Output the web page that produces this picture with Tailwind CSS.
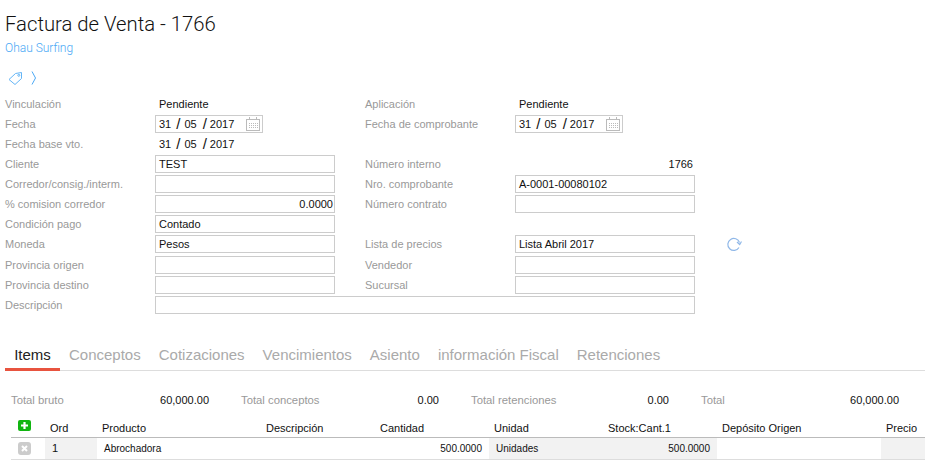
<!DOCTYPE html>
<html lang="en">
<head>
    <meta charset="UTF-8">
    <title>Factura de Venta - 1766</title>
    <script src="https://cdn.jsdelivr.net/npm/@tailwindcss/browser@4"></script>
</head>
<body class="bg-white overflow-hidden font-['Roboto',sans-serif] text-[11px] text-[#111]">
<div class="w-[925px] h-[472px] overflow-hidden">
    <!-- Header -->
    <div class="pl-[5px] pt-[10px]">
        <h1 class="text-[20.3px] leading-[28px] font-light text-[#111]">Factura de Venta - 1766</h1>
        <div class="text-[12px] leading-[16px] mt-[2px] font-light text-[#4aa8f5]">Ohau Surfing</div>
        <div class="flex items-center gap-[8px] h-[16px] mt-[14px] pl-[3px]">
            <svg class="w-[15px] h-[15px]" viewBox="0 0 15 15" fill="none" stroke="#64b5f6" stroke-width="1"><path d="M1 8.500 7.500 2.500 13.500 1.500 13.500 7.500 7 13.500Z"/><circle cx="10.800" cy="4.300" r="1"/></svg>
            <svg class="w-[6px] h-[14px]" viewBox="0 0 6 14" fill="none" stroke="#4aa8f5" stroke-width="1"><path d="M1 .5 4.500 7 1 13.500"/></svg>
        </div>
    </div>

    <!-- Form -->
    <div class="pl-[5px] mt-[8px] grid grid-cols-[150px_180px_30px_150px_180px_1fr] grid-rows-[repeat(7,20px)_21px_repeat(3,20px)] items-center w-[920px] font-['Liberation_Sans',sans-serif]">
        <div class="text-[#999]">Vinculación</div>
        <div class="pl-[4px]">Pendiente</div>
        <div></div>
        <div class="text-[#999]">Aplicación</div>
        <div class="pl-[4px]">Pendiente</div>
        <div></div>

        <div class="text-[#999]">Fecha</div>
        <div class="flex items-center w-[108px] h-[18px] border border-[#ccc] pl-[3px]">
            <span>31</span><span class="text-[15px] ml-[5px]">/</span><span class="ml-[4px]">05</span><span class="text-[15px] ml-[6px]">/</span><span class="ml-[3px]">2017</span>
            <svg class="w-[14px] h-[14px] ml-auto mr-[2px]" viewBox="0 0 14 14" fill="none" stroke="#bbb" stroke-width="1"><rect x=".5" y="2.500" width="13" height="11"/><path d="M3.500 0V3M10.500 0V3"/><path d="M3 6.500H12M3 8.500H12M3 10.500H12" stroke-dasharray="1 1"/></svg>
        </div>
        <div></div>
        <div class="text-[#999]">Fecha de comprobante</div>
        <div class="flex items-center w-[108px] h-[18px] border border-[#ccc] pl-[3px]">
            <span>31</span><span class="text-[15px] ml-[5px]">/</span><span class="ml-[4px]">05</span><span class="text-[15px] ml-[6px]">/</span><span class="ml-[3px]">2017</span>
            <svg class="w-[14px] h-[14px] ml-auto mr-[2px]" viewBox="0 0 14 14" fill="none" stroke="#bbb" stroke-width="1"><rect x=".5" y="2.500" width="13" height="11"/><path d="M3.500 0V3M10.500 0V3"/><path d="M3 6.500H12M3 8.500H12M3 10.500H12" stroke-dasharray="1 1"/></svg>
        </div>
        <div></div>

        <div class="text-[#999]">Fecha base vto.</div>
        <div class="flex items-center pl-[4px]">
            <span>31</span><span class="text-[15px] ml-[5px]">/</span><span class="ml-[4px]">05</span><span class="text-[15px] ml-[6px]">/</span><span class="ml-[3px]">2017</span>
        </div>
        <div></div><div></div><div></div><div></div>

        <div class="text-[#999]">Cliente</div>
        <div class="h-[18px] border border-[#ccc] pl-[3px] leading-[16px]">TEST</div>
        <div></div>
        <div class="text-[#999]">Número interno</div>
        <div class="text-right pr-[2px]">1766</div>
        <div></div>

        <div class="text-[#999]">Corredor/consig./interm.</div>
        <div class="h-[18px] border border-[#ccc]"></div>
        <div></div>
        <div class="text-[#999]">Nro. comprobante</div>
        <div class="h-[18px] border border-[#ccc] pl-[3px] leading-[16px]">A-0001-00080102</div>
        <div></div>

        <div class="text-[#999]">% comision corredor</div>
        <div class="h-[18px] border border-[#ccc] pr-[1px] text-right leading-[16px]">0.0000</div>
        <div></div>
        <div class="text-[#999]">Número contrato</div>
        <div class="h-[18px] border border-[#ccc]"></div>
        <div></div>

        <div class="text-[#999]">Condición pago</div>
        <div class="h-[18px] border border-[#ccc] pl-[3px] leading-[16px]">Contado</div>
        <div></div><div></div><div></div><div></div>

        <div class="text-[#999] self-start leading-[20px]">Moneda</div>
        <div class="h-[18px] self-start mt-[1px] border border-[#ccc] pl-[3px] leading-[16px]">Pesos</div>
        <div></div>
        <div class="text-[#999] self-start leading-[20px]">Lista de precios</div>
        <div class="h-[18px] self-start mt-[1px] border border-[#ccc] pl-[3px] leading-[16px]">Lista Abril 2017</div>
        <div class="pl-[31px] self-start mt-[2px]">
            <svg class="w-[16px] h-[16px]" viewBox="0 0 16 16" fill="none" stroke="#90b8e8" stroke-width="1.200"><path d="M13 11.500A6 6 0 1 1 13.500 6.500"/><path d="M11 6 13.700 8.500 15.500 5.500"/></svg>
        </div>

        <div class="text-[#999]">Provincia origen</div>
        <div class="h-[18px] border border-[#ccc]"></div>
        <div></div>
        <div class="text-[#999]">Vendedor</div>
        <div class="h-[18px] border border-[#ccc]"></div>
        <div></div>

        <div class="text-[#999]">Provincia destino</div>
        <div class="h-[18px] border border-[#ccc]"></div>
        <div></div>
        <div class="text-[#999]">Sucursal</div>
        <div class="h-[18px] border border-[#ccc]"></div>
        <div></div>

        <div class="text-[#999]">Descripción</div>
        <div class="col-span-4 h-[18px] border border-[#ccc]"></div>
        <div></div>
    </div>

    <!-- Tabs -->
    <div class="ml-[5px] mt-[28px] h-[28px] border-b border-[#ddd] flex text-[15px] text-[#aaa] font-['Liberation_Sans',sans-serif]">
        <div class="w-[55px] h-[28px] border-b-[3px] border-[#e8533f] text-center text-[#222] leading-[24px]">Items</div>
        <div class="ml-[9px] leading-[24px]">Conceptos</div>
        <div class="ml-[18px] leading-[24px]">Cotizaciones</div>
        <div class="ml-[18px] leading-[24px]">Vencimientos</div>
        <div class="ml-[18px] leading-[24px]">Asiento</div>
        <div class="ml-[18px] leading-[24px]">información Fiscal</div>
        <div class="ml-[18px] leading-[24px]">Retenciones</div>
    </div>

    <!-- Totals -->
    <div class="flex items-center h-[16px] mt-[21px] pl-[11px] font-['Liberation_Sans',sans-serif]">
        <div class="w-[100px] text-[11.3px] text-[#999]">Total bruto</div>
        <div class="w-[98px] text-right">60,000.00</div>
        <div class="w-[131px] pl-[32px] text-[11.3px] text-[#999]">Total conceptos</div>
        <div class="w-[99px] text-right">0.00</div>
        <div class="w-[131px] pl-[32px] text-[11.3px] text-[#999]">Total retenciones</div>
        <div class="w-[99px] text-right">0.00</div>
        <div class="w-[131px] pl-[32px] text-[11.3px] text-[#999]">Total</div>
        <div class="w-[99px] text-right">60,000.00</div>
    </div>

    <!-- Table -->
    <div class="ml-[11px] mt-[12px] font-['Liberation_Sans',sans-serif]">
        <div class="grid grid-cols-[34px_52px_164px_114px_114px_114px_114px_164px_1fr] h-[18px] items-center border-b border-[#bbb]">
            <div class="pl-[7px]"><svg class="w-[13px] h-[13px] -mt-[5px]" viewBox="0 0 13 13"><rect width="13" height="11" y="0" rx="2" fill="#11b511"/><path d="M6.500 2V9M3 5.500H10" stroke="#fff" stroke-width="2.200"/></svg></div>
            <div class="pl-[5px]">Ord</div>
            <div class="pl-[5px]">Producto</div>
            <div class="pl-[5px]">Descripción</div>
            <div class="pl-[5px]">Cantidad</div>
            <div class="pl-[5px]">Unidad</div>
            <div class="pl-[5px]">Stock:Cant.1</div>
            <div class="pl-[5px]">Depósito Origen</div>
            <div class="pl-[5px]">Precio</div>
        </div>
        <div class="grid grid-cols-[34px_52px_164px_114px_114px_114px_114px_164px_1fr] h-[22px] items-stretch border-b border-[#ddd] text-[10px] leading-[21px]">
            <div class="pl-[7px] flex items-center"><svg class="w-[13px] h-[13px]" viewBox="0 0 13 13"><rect width="13" height="13" rx="3" fill="#ccc"/><path d="M4 4 9 9M9 4 4 9" stroke="#fff" stroke-width="2"/></svg></div>
            <div class="bg-[#f2f2f2] pl-[7px] text-[11px]">1</div>
            <div class="pl-[7px]">Abrochadora</div>
            <div></div>
            <div class="text-right pr-[7px]">500.0000</div>
            <div class="bg-[#f2f2f2] pl-[7px]">Unidades</div>
            <div class="bg-[#f2f2f2] text-right pr-[7px]">500.0000</div>
            <div></div>
            <div class="bg-[#f2f2f2]"></div>
        </div>
    </div>
</div>
</body>
</html>
